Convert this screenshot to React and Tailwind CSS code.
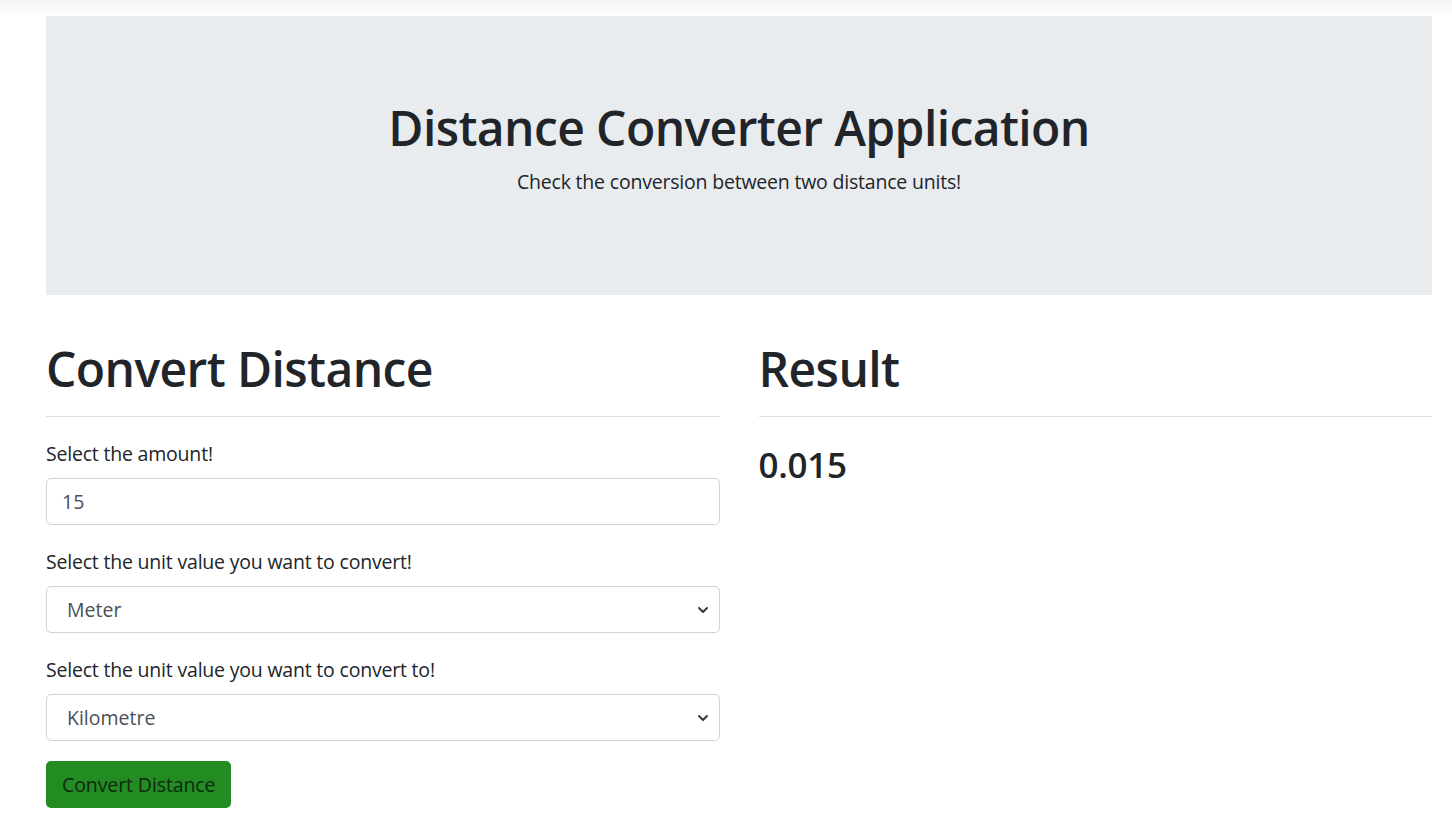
import { useState } from 'react'

const factors = { Meter: 1, Kilometre: 1000, Centimetre: 0.01, Mile: 1609.344, Foot: 0.3048 }

function Chevron() {
  return (
    <svg width="16" height="16" viewBox="0 0 16 16" className="pointer-events-none absolute right-[9px] top-1/2 -translate-y-1/2">
      <path d="M4 6l4 4 4-4" fill="none" stroke="#343a40" strokeWidth="2" strokeLinecap="round" strokeLinejoin="round" />
    </svg>
  )
}

function UnitSelect({ value, onChange }) {
  return (
    <div className="relative">
      <select
        value={value}
        onChange={e => onChange(e.target.value)}
        className="w-full h-[47px] appearance-none rounded-[5px] border border-[#ced4da] bg-white pl-[20px] text-[19.5px] text-[#495057] outline-none"
      >
        {Object.keys(factors).map(u => <option key={u}>{u}</option>)}
      </select>
      <Chevron />
    </div>
  )
}

export default function App() {
  const [amount, setAmount] = useState('15')
  const [from, setFrom] = useState('Meter')
  const [to, setTo] = useState('Kilometre')
  const [result, setResult] = useState('0.015')

  const convert = () => {
    const v = parseFloat(amount) * factors[from] / factors[to]
    setResult(isNaN(v) ? '' : String(+v.toPrecision(10)))
  }

  return (
    <div className="min-h-screen bg-white font-['Open_Sans',sans-serif] text-[#212529]">
      <div className="h-[16px] bg-gradient-to-b from-[#f3f3f3] to-white" />
      <div className="ml-[46px] w-[1386px]">
        <div className="h-[279px] bg-[#e9ecef] flex flex-col items-center pt-[84px]">
          <h1 className="text-[48px] leading-[56px] font-semibold tracking-[-0.6px]">Distance Converter Application</h1>
          <p className="mt-[11px] text-[19.5px] leading-[30px] tracking-[-0.2px]">Check the conversion between two distance units!</p>
        </div>

        <div className="grid grid-cols-2 gap-[39px] pt-[44px]">
          <div>
            <h2 className="text-[48px] leading-[60px] font-semibold tracking-[-0.6px]">Convert Distance</h2>
            <hr className="mt-[17px] border-[#dfdfdf]" />
            <div className="mt-[22px]">
              <label className="block text-[19.5px] leading-[30px] tracking-[-0.2px]">Select the amount!</label>
              <input
                value={amount}
                onChange={e => setAmount(e.target.value)}
                className="mt-[9px] block w-full h-[47px] rounded-[5px] border border-[#ced4da] px-[15px] text-[19.5px] text-[#495057] outline-none"
              />
            </div>
            <div className="mt-[22px]">
              <label className="block text-[19.5px] leading-[30px] tracking-[-0.2px]">Select the unit value you want to convert!</label>
              <div className="mt-[9px]"><UnitSelect value={from} onChange={setFrom} /></div>
            </div>
            <div className="mt-[22px]">
              <label className="block text-[19.5px] leading-[30px] tracking-[-0.2px]">Select the unit value you want to convert to!</label>
              <div className="mt-[9px]"><UnitSelect value={to} onChange={setTo} /></div>
            </div>
            <button
              onClick={convert}
              className="mt-[20px] h-[47px] rounded-[5px] bg-[#228b22] px-[16px] text-[19.5px] tracking-[-0.1px] text-[#0f2a0f]"
            >
              Convert Distance
            </button>
          </div>

          <div>
            <h2 className="text-[48px] leading-[60px] font-semibold tracking-[-0.6px]">Result</h2>
            <hr className="mt-[17px] border-[#dfdfdf]" />
            <h3 className="mt-[24px] text-[35px] leading-[48px] font-semibold tracking-[-0.3px]">{result}</h3>
          </div>
        </div>
      </div>
    </div>
  )
}
